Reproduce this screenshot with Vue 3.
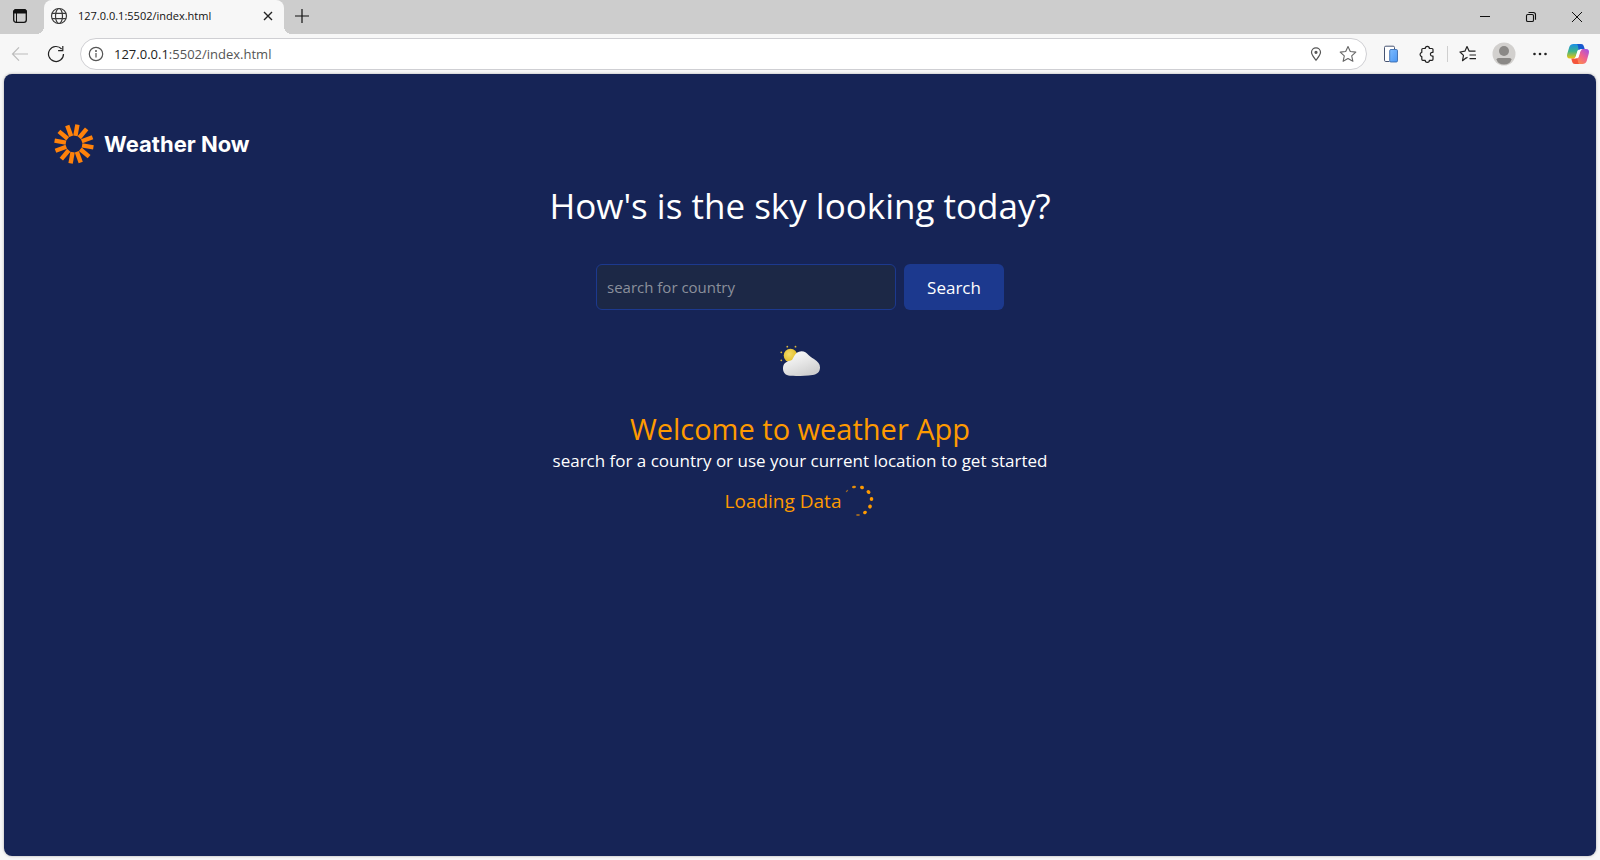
<script setup>
import { ref } from 'vue'

const country = ref('')
const rays = Array.from({ length: 12 }, (_, i) => 10 + i * 30)
const dots = [
  { x: 4, y: 6, rx: 1.6, ry: 0.6, r: -45, o: 0.6 },
  { x: 11, y: 2, rx: 2, ry: 1.3, r: -10, o: 0.9 },
  { x: 19, y: 2.5, rx: 2, ry: 1.7, r: 15, o: 1 },
  { x: 25.5, y: 7, rx: 2.1, ry: 1.8, r: 45, o: 1 },
  { x: 28.5, y: 14, rx: 2, ry: 1.8, r: 90, o: 1 },
  { x: 27, y: 21.5, rx: 2.1, ry: 1.8, r: -60, o: 1 },
  { x: 22, y: 27.5, rx: 2, ry: 1.6, r: -30, o: 1 },
  { x: 15, y: 30, rx: 2, ry: 0.7, r: 0, o: 0.8 },
]
</script>

<template>
  <div class="browser">
    <header class="tabbar">
      <button class="workspace" aria-label="Tab actions">
        <svg width="16" height="16" viewBox="0 0 16 16"><rect x="1.7" y="1.7" width="12.6" height="12.6" rx="2.4" fill="none" stroke="#111" stroke-width="1.3" /><path d="M1.5 5V4a2.5 2.5 0 0 1 2.5-2.5h8A2.5 2.5 0 0 1 14.5 4v1zM4.5 5v9" fill="#111" stroke="#111" stroke-width="1" /></svg>
      </button>
      <div class="tab">
        <svg width="18" height="18" viewBox="0 0 18 18" fill="none" stroke="#3b3b3b" stroke-width="1.2"><circle cx="9" cy="9" r="7.5" /><ellipse cx="9" cy="9" rx="3.5" ry="7.5" /><path d="M2 6.3h14M2 11.7h14" /></svg>
        <span class="tab-title">127.0.0.1:5502/index.html</span>
        <button class="tab-close" aria-label="Close tab">
          <svg width="10" height="10" viewBox="0 0 10 10" stroke="#222" stroke-width="1.4"><path d="M1 1l8 8M9 1l-8 8" /></svg>
        </button>
      </div>
      <button class="new-tab" aria-label="New tab">
        <svg width="14" height="14" viewBox="0 0 14 14" stroke="#111" stroke-width="1.2"><path d="M7 0v14M0 7h14" /></svg>
      </button>
      <div class="window-controls">
        <button aria-label="Minimize"><svg width="12" height="12" viewBox="0 0 12 12" stroke="#111"><path d="M1 5.5h10" /></svg></button>
        <button aria-label="Restore"><svg width="12" height="12" viewBox="0 0 12 12" fill="none" stroke="#111" stroke-width="1.1"><rect x="1.5" y="3.5" width="7" height="7" rx="1.3" /><path d="M3.5 1.5h4.8a2.2 2.2 0 0 1 2.2 2.2v5" /></svg></button>
        <button aria-label="Close window"><svg width="12" height="12" viewBox="0 0 12 12" stroke="#111"><path d="M1 1l10 10M11 1L1 11" /></svg></button>
      </div>
    </header>

    <nav class="toolbar">
      <button class="nav-btn" aria-label="Back">
        <svg width="18" height="16" viewBox="0 0 18 16" fill="none" stroke="#bcbcbc" stroke-width="1.2"><path d="M17 8H1.5M8 1.3L1.5 8 8 14.7" /></svg>
      </button>
      <button class="nav-btn" aria-label="Reload">
        <svg width="18" height="18" viewBox="0 0 18 18" fill="none" stroke="#222" stroke-width="1.2"><path d="M16.5 9A7.5 7.5 0 1 1 14.6 4M15.8 1v4.7h-4.7" /></svg>
      </button>
      <div class="address">
        <svg width="16" height="16" viewBox="0 0 16 16" fill="none" stroke="#555" stroke-width="1.2"><circle cx="8" cy="8" r="6.7" /><path d="M8 7v4.5" /><circle cx="8" cy="4.9" r=".4" fill="#555" /></svg>
        <span class="url"><b>127.0.0.1</b>:5502/index.html</span>
        <button class="pin" aria-label="Location">
          <svg width="12" height="16" viewBox="0 0 12 16" fill="none" stroke="#555" stroke-width="1.2"><path d="M6 14.2C4 11.5 1.5 9 1.5 6.3a4.5 4.5 0 0 1 9 0C10.5 9 8 11.5 6 14.2z" /><circle cx="6" cy="6.3" r="1" fill="#555" /></svg>
        </button>
        <button aria-label="Add to favorites">
          <svg width="18" height="18" viewBox="0 0 18 18" fill="none" stroke="#666" stroke-width="1.1" stroke-linejoin="round"><path d="M9 1.5l2.300 5 5.500.6-4.100 3.700 1.200 5.500L9 13.500l-4.900 2.800 1.200-5.500L1.200 7.100l5.500-.6z" /></svg>
        </button>
      </div>
      <div class="actions">
        <button aria-label="Device sync">
          <svg width="16" height="18" viewBox="0 0 16 18"><defs><linearGradient id="phone" x1="0" y1="0" x2="1" y2="1"><stop offset="0" stop-color="#7dbcff" /><stop offset="1" stop-color="#4a95f2" /></linearGradient></defs><path d="M6.5 16.500H2.800A1.300 1.300 0 0 1 1.500 15.200V2.500A1.300 1.300 0 0 1 2.800 1.200h7.400A1.300 1.300 0 0 1 11.500 2.500v1.500" fill="#fff" stroke="#465371" /><rect x="6.700" y="4.500" width="7.800" height="12.500" rx="1.200" fill="url(#phone)" stroke="#2d5fa5" stroke-width=".8" /></svg>
        </button>
        <button aria-label="Extensions">
          <svg width="18" height="18" viewBox="0 0 18 18" fill="none" stroke="#222" stroke-width="1.2" stroke-linejoin="round"><path d="M4.800 3.500h2.400a2.100 2.100 0 0 1 4.200 0h2.600a1 1 0 0 1 1 1v2.800h-.7a1.900 1.900 0 0 0 0 3.800h.7v3.200a1 1 0 0 1-1 1h-2.600a2.100 2.100 0 0 1-4.200 0H4.800a1 1 0 0 1-1-1v-2.700a2.200 2.200 0 0 1 0-4.300V4.500a1 1 0 0 1 1-1z" /></svg>
        </button>
        <span class="divider"></span>
        <button aria-label="Favorites">
          <svg width="18" height="18" viewBox="0 0 18 18" fill="none" stroke="#222" stroke-width="1.2" stroke-linejoin="round"><path d="M7.200 12.800L3.500 15.700l1-5.300L1 7l4.900-.8L8 1.500l2.200 4.700h6.300M10.500 10H17M10.500 13.700H17M6.500 13.500l2-1.300" /></svg>
        </button>
        <button class="avatar" aria-label="Profile">
          <svg width="24" height="24" viewBox="0 0 24 24"><circle cx="12" cy="12" r="11.500" fill="#d2d0ce" /><circle cx="12" cy="9" r="5" fill="#8a8886" /><path d="M4.500 17.500Q4.500 16 6.500 16h11q2 0 2 1.500Q18 22.500 12 22.500t-7.500-5z" fill="#8a8886" /></svg>
        </button>
        <button aria-label="More">
          <svg width="16" height="16" viewBox="0 0 16 16" fill="#222"><circle cx="2.500" cy="8" r="1.300" /><circle cx="8" cy="8" r="1.300" /><circle cx="13.500" cy="8" r="1.300" /></svg>
        </button>
        <button aria-label="Copilot">
          <svg width="24" height="22" viewBox="0 0 24 22">
            <defs>
              <linearGradient id="ribbon-left" x1="0" y1="0" x2="0" y2="1"><stop offset="0" stop-color="#1a8fe8" /><stop offset=".5" stop-color="#3cb48a" /><stop offset="1" stop-color="#f0c60c" /></linearGradient>
              <linearGradient id="ribbon-right" x1="1" y1="0" x2=".2" y2="1"><stop offset="0" stop-color="#9a50ee" /><stop offset=".5" stop-color="#ee6090" /><stop offset="1" stop-color="#ff8f45" /></linearGradient>
            </defs>
            <path d="M7.500 1H15l-3 6-2 6.500c-.5 1.500-1.500 2-3 2H4c-2.700 0-3.500-2-2.800-4.500L3.300 4C3.900 2 5.500 1 7.500 1z" fill="url(#ribbon-left)" />
            <path d="M11 1h4c2 0 2.500 1.200 3 2.800l.7 2.200h-3c-1.800 0-2.700.8-3.300 2.700L12 9.500C12.500 5.500 12.500 2.500 11 1z" fill="#1759cf" />
            <path d="M16.500 21H9l3-6 2-6.500c.5-1.500 1.500-2.500 3-2.500h3c2.700 0 3.500 2 2.800 4.500L20.700 18c-.6 2-2.200 3-4.200 3z" fill="url(#ribbon-right)" />
            <path d="M13 21H9c-2 0-2.500-1.200-3-2.800L5.300 15.500h2.500c1.800 0 2.700-.8 3.300-2.700l.9-.8c-.5 4-.5 7.500 1 9z" fill="#f4553c" />
            <path d="M14.500 6.500h1.800c-1.300.5-1.700 1.300-2.100 2.500l-1.200 4c-.6 1.800-1.500 2.500-3.500 2.500H7.800c1.300-.5 1.700-1.300 2.100-2.500l1.200-4c.6-1.800 1.400-2.500 3.400-2.500z" fill="#fff" />
          </svg>
        </button>
      </div>
    </nav>

    <main class="page">
      <div class="logo">
        <svg width="40" height="40" viewBox="0 0 40 40" fill="#ff820a"><rect v-for="a in rays" :key="a" x="17.800" y="0.300" width="4.400" height="11.500" :transform="`rotate(${a} 20 20)`" /></svg>
        <span>Weather Now</span>
      </div>
      <h1>How's is the sky looking today?</h1>
      <form class="search" @submit.prevent>
        <input v-model="country" type="text" aria-label="Country" placeholder="search for country" />
        <button type="submit">Search</button>
      </form>
      <svg class="cloud" width="40" height="40" viewBox="0 0 40 40">
        <defs>
          <radialGradient id="sun" cx=".4" cy=".4" r=".7"><stop offset="0" stop-color="#f4dc6a" /><stop offset="1" stop-color="#dfb81c" /></radialGradient>
          <linearGradient id="cl" x1="0" y1="0" x2=".6" y2="1"><stop offset="0" stop-color="#fff" /><stop offset=".5" stop-color="#e9e9e9" /><stop offset="1" stop-color="#cfcfcf" /></linearGradient>
        </defs>
        <g fill="#d9b640"><circle cx="7.300" cy="5.700" r=".9" /><circle cx="15.500" cy="5.700" r=".9" /><circle cx="1.300" cy="11.300" r=".9" /><circle cx="1.300" cy="19.300" r=".9" /></g>
        <circle cx="10.500" cy="14.500" r="6.800" fill="url(#sun)" />
        <path d="M10 34.800C5.500 34.500 3 31.500 3 27.500c0-4.200 2.500-7 7-7.700 2-.3 2.500-1.500 3.500-3.500 1.800-3.800 4.500-6 8-6 3 0 5 1.500 7 3.700 1.500 1.500 3 2.500 5.500 4 4 2.500 6 5 6 8.500 0 4.500-3 7-7.500 7.500-7 .8-15 1.200-22.500.8z" fill="url(#cl)" />
      </svg>
      <h2>Welcome to weather App</h2>
      <p class="hint">search for a country or use your current location to get started</p>
      <div class="loading" role="status">
        <span>Loading Data</span>
        <svg width="32" height="32" viewBox="0 0 32 32" fill="#fe9a00"><ellipse v-for="d in dots" :key="d.y" :cx="d.x" :cy="d.y" :rx="d.rx" :ry="d.ry" :opacity="d.o" :transform="`rotate(${d.r} ${d.x} ${d.y})`" /></svg>
      </div>
    </main>
  </div>
</template>

<style>
body { margin: 0; background: #f7f7f7; }
</style>

<style scoped>
* { box-sizing: border-box; }
.browser {
  display: flex;
  flex-direction: column;
  min-height: 100vh;
  padding-bottom: 4px;
  background: #f7f7f7;
  font-family: "Segoe UI", "Open Sans", "Noto Sans", sans-serif;
}
button { border: 0; padding: 0; background: none; font: inherit; display: flex; align-items: center; justify-content: center; }
svg { display: block; flex: none; }
.tabbar { display: flex; height: 34px; background: #cdcdcd; }
.workspace { width: 44px; padding-right: 4px; padding-bottom: 2px; }
.tab {
  position: relative;
  display: flex;
  align-items: center;
  width: 240px;
  padding: 0 11px 2px 6px;
  background: #f7f7f7;
  border-radius: 8px 8px 0 0;
}
.tab::before, .tab::after { content: ""; position: absolute; bottom: 0; width: 8px; height: 8px; }
.tab::before { right: 100%; background: radial-gradient(circle at 0 0, transparent 8px, #f7f7f7 8px); }
.tab::after { left: 100%; background: radial-gradient(circle at 100% 0, transparent 8px, #f7f7f7 8px); }
.tab-title { flex: 1; margin-left: 10px; font-size: 11px; line-height: 16px; color: #111; white-space: nowrap; }
.new-tab { width: 36px; padding-bottom: 2px; }
.window-controls { display: flex; margin-left: auto; }
.window-controls button { width: 46px; }
.toolbar { display: flex; align-items: center; height: 40px; padding-right: 10px; }
.nav-btn { width: 36px; margin-left: 2px; }
.nav-btn + .nav-btn { margin-left: 0; }
.address {
  display: flex;
  align-items: center;
  flex: 1;
  height: 32px;
  margin-left: 6px;
  padding: 0 9px 0 7px;
  background: #fff;
  border: 1px solid #cfcfd3;
  border-radius: 16px;
}
.url { flex: 1; margin-left: 10px; font-size: 13px; line-height: 20px; color: #555; }
.url b { font-weight: 400; color: #222; }
.pin { margin-right: 17px; }
.actions { display: flex; align-items: center; margin-left: 16px; }
.actions button { width: 24px; height: 24px; margin-right: 12px; }
.actions button:first-child { width: 16px; margin-right: 16px; }
.actions button:last-child { margin-right: 0; margin-left: 2px; }
.divider { width: 1px; height: 16px; margin: 0 8px 0 -4px; background: #cfcfcf; }
.page {
  flex: 1;
  display: flex;
  flex-direction: column;
  align-items: center;
  margin: 0 4px;
  padding: 50px;
  background: #162456;
  border-radius: 8px;
  box-shadow: 0 0 3px rgba(0, 0, 0, 0.3);
  color: #fff;
}
.logo { display: flex; align-items: center; align-self: flex-start; gap: 10px; height: 40px; font: 700 22px/40px Inter, sans-serif; }
h1, h2, p { margin: 0; font-weight: 400; text-align: center; }
h1 { margin-top: 20px; font-size: 35px; line-height: 44px; }
.search { display: flex; gap: 8px; margin-top: 36px; }
.search input {
  width: 300px;
  height: 46px;
  padding: 0 10px;
  border: 1px solid #1c398e;
  border-radius: 6px;
  background: #1c2846;
  color: #fff;
  font: inherit;
  font-size: 15px;
}
.search input::placeholder { color: #8b909c; opacity: 1; }
.search button { width: 100px; height: 46px; border-radius: 6px; background: #1c398e; color: #fff; font-size: 17px; }
.cloud { margin-top: 31px; }
h2 { margin-top: 30px; font-size: 29px; line-height: 36px; color: #fe9a00; }
.hint { font-size: 17px; line-height: 28px; }
.loading { display: flex; align-items: center; gap: 2px; margin-top: 10px; font-size: 19px; line-height: 32px; color: #fe9a00; }
</style>
